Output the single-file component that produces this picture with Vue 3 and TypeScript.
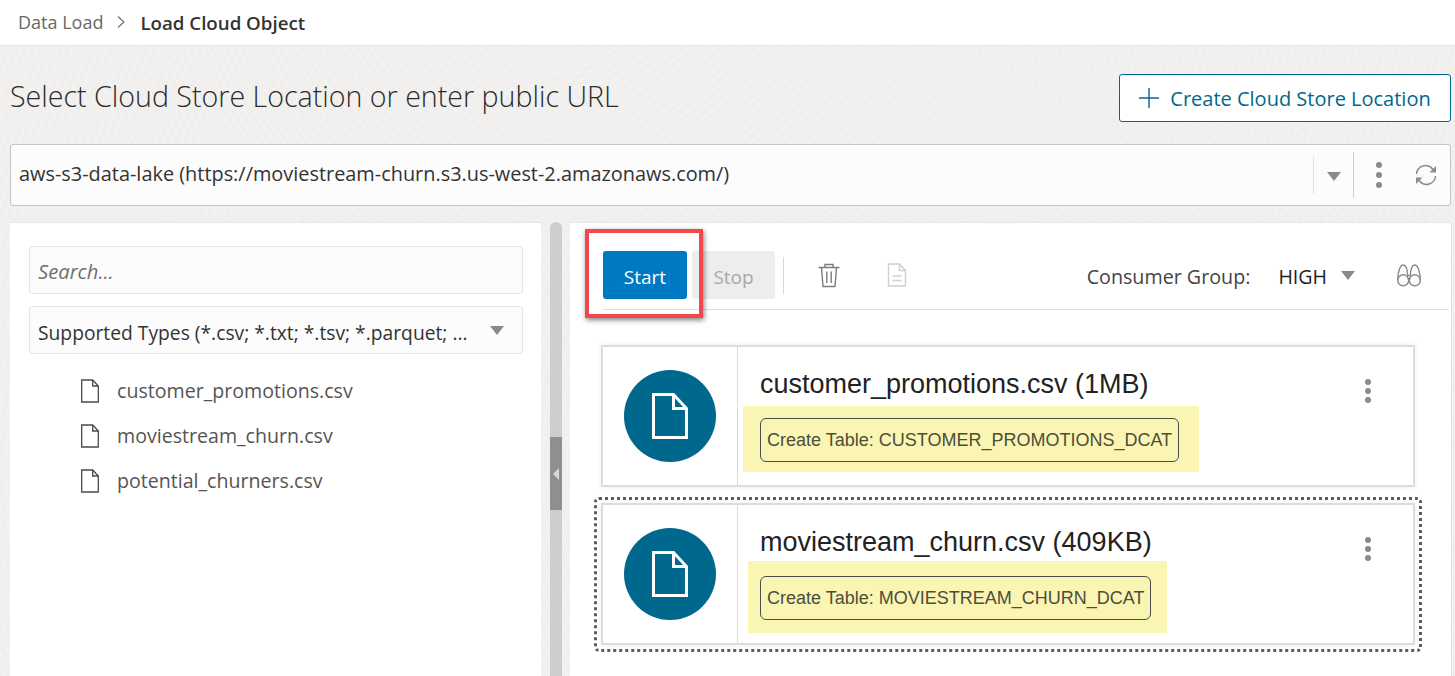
<script setup lang="ts">
interface CloudFile {
  name: string
  size: string
  table: string
  focused: boolean
}

const sourceFiles = ['customer_promotions.csv', 'moviestream_churn.csv', 'potential_churners.csv']

const cards: CloudFile[] = [
  { name: 'customer_promotions.csv', size: '1MB', table: 'CUSTOMER_PROMOTIONS_DCAT', focused: false },
  { name: 'moviestream_churn.csv', size: '409KB', table: 'MOVIESTREAM_CHURN_DCAT', focused: true },
]
</script>

<template>
  <div class="page">
    <header class="crumbs">
      <span class="crumb">Data Load</span>
      <svg class="crumb-sep" width="10" height="14" viewBox="0 0 10 14">
        <path d="M2 1.500 8 7l-6 5.500" fill="none" stroke="#6b6b6b" stroke-width="1.100" />
      </svg>
      <span class="crumb-current">Load Cloud Object</span>
    </header>

    <main class="body">
      <div class="title-row">
        <h1 class="title">Select Cloud Store Location or enter public URL</h1>
        <button class="create-btn">
          <svg width="20" height="20" viewBox="0 0 20 20">
            <path d="M10 0v20M0 10h20" stroke="#00688c" stroke-width="1.400" />
          </svg>
          <span class="create-label">Create Cloud Store Location</span>
        </button>
      </div>

      <div class="location">
        <span class="location-text">aws-s3-data-lake (https://moviestream-churn.s3.us-west-2.amazonaws.com/)</span>
        <div class="location-tools">
          <span class="caret-cell"><i class="caret"></i></span>
          <span class="dots-cell">
            <i class="dot"></i><i class="dot"></i><i class="dot"></i>
          </span>
          <svg class="refresh" width="24" height="24" viewBox="0 0 24 24" fill="none" stroke="#8b8b8b" stroke-width="1.500">
            <path d="M2.500 11a9 9 0 0 1 16-5l2 2.500" />
            <path d="M21.500 13a9 9 0 0 1-16 5l-2-2.500" />
            <path d="M22 3v6.500h-6.500z" fill="#8b8b8b" stroke="none" />
            <path d="M2 21v-6.500h6.500z" fill="#8b8b8b" stroke="none" />
          </svg>
        </div>
      </div>

      <div class="split">
        <aside class="left">
          <div class="search"><span>Search...</span></div>
          <div class="types">
            <span class="types-label">Supported Types (*.csv; *.txt; *.tsv; *.parquet; ...</span>
            <i class="caret"></i>
          </div>
          <ul class="tree">
            <li v-for="f in sourceFiles" :key="f" class="tree-row">
              <svg width="18" height="24" viewBox="0 0 18 24" fill="none" stroke="#4a4a4a" stroke-width="1.300">
                <path d="M.7 1h11l5.600 6v16H.7z" />
                <path d="M11.700 1v6h5.600" />
              </svg>
              <span>{{ f }}</span>
            </li>
          </ul>
        </aside>

        <div class="splitter">
          <div class="splitter-thumb"><i class="splitter-arrow"></i></div>
        </div>

        <section class="right">
          <div class="toolbar">
            <button class="btn-start">Start</button>
            <button class="btn-stop">Stop</button>
            <span class="tool-sep"></span>
            <svg class="trash" width="22" height="25" viewBox="0 0 22 25" fill="none" stroke="#7c7c7c" stroke-width="1.400">
              <path d="M.5 4.500h21M7 4.500V1.500h8v3M3.500 4.500l1.500 19h12l1.500-19" />
              <path d="M8.800 8.500v11.500M13.200 8.500v11.500" />
            </svg>
            <svg class="doc" width="20" height="24" viewBox="0 0 20 24" fill="none" stroke="#cfcfcf" stroke-width="1.400">
              <path d="M1.500 1h11l6 6.500V23h-17z" />
              <path d="M12.500 1v6.500h6M5.500 13h9M5.500 17.500h9" />
            </svg>
            <span class="consumer-label">Consumer Group:</span>
            <span class="consumer-value">HIGH</span>
            <i class="caret"></i>
            <svg class="binoculars" width="24" height="23" viewBox="0 0 24 23" fill="none" stroke="#8b8b8b" stroke-width="1.400">
              <circle cx="6.200" cy="16.300" r="5.500" />
              <circle cx="17.800" cy="16.300" r="5.500" />
              <path d="M.7 16.300C.7 10 2.500 1 6.200 1c3.300 0 4.400 4 4.400 11.500M23.300 16.300C23.300 10 21.500 1 17.800 1c-3.300 0-4.400 4-4.400 11.500M10.600 11.500h2.800M10.600 15h2.800" />
            </svg>
          </div>

          <div class="cards">
            <div v-for="c in cards" :key="c.name" class="card-wrap" :class="{ focused: c.focused }">
              <article class="card">
                <div class="card-icon">
                  <div class="circle">
                    <svg width="36" height="46" viewBox="0 0 36 46" fill="none" stroke="#fff" stroke-width="3">
                      <path d="M1.500 1.500h20l13 14v29h-33z" />
                      <path d="M21.500 1.500v14h13" />
                    </svg>
                  </div>
                </div>
                <div class="card-main">
                  <div class="card-title">{{ c.name }} ({{ c.size }})</div>
                  <div class="highlight">
                    <span class="tag">Create Table: {{ c.table }}</span>
                  </div>
                </div>
                <div class="card-menu">
                  <i class="dot"></i><i class="dot"></i><i class="dot"></i>
                </div>
              </article>
            </div>
          </div>

          <div class="callout"></div>
        </section>
      </div>
    </main>
  </div>
</template>

<style>
html,
body {
  overflow: hidden;
}
</style>

<style scoped>
.page {
  width: 1455px;
  height: 676px;
  overflow: hidden;
  font-family: "Open Sans", "Noto Sans", sans-serif;
  color: #333;
  background: #f0efed;
}

i {
  display: block;
}

/* breadcrumb */
.crumbs {
  height: 46px;
  box-sizing: border-box;
  padding: 0 0 1px 18px;
  display: flex;
  align-items: center;
  background: #fff;
  border-bottom: 1px solid #e6e6e6;
  font-size: 18px;
}

.crumb {
  color: #686868;
}

.crumb-sep {
  margin: 0 14px 0 13px;
}

.crumb-current {
  color: #333;
  font-weight: 600;
  font-size: 18.700px;
}

.body {
  height: 630px;
  padding: 0 4px 0 10px;
  background-image:
    repeating-radial-gradient(circle at 560px -120px, rgba(255, 255, 255, 0.14) 0 2px, transparent 2px 7px),
    repeating-radial-gradient(circle at 1000px 420px, rgba(255, 255, 255, 0.12) 0 2px, transparent 2px 8px);
}

.title-row {
  height: 98px;
  display: flex;
  justify-content: space-between;
  align-items: flex-start;
}

.title {
  margin: 31px 0 0;
  font-size: 28.600px;
  line-height: 38px;
  font-weight: 300;
  color: #2b2b2b;
}

.create-btn {
  margin-top: 28px;
  width: 332px;
  height: 48px;
  display: flex;
  align-items: center;
  justify-content: center;
  gap: 11px;
  background: #fff;
  border: 1px solid #00688c;
  border-radius: 3px;
  color: #00688c;
  font: 400 20px "Open Sans", sans-serif;
}

.create-label {
  padding-top: 1px;
}

/* location select */
.location {
  height: 62px;
  box-sizing: border-box;
  display: flex;
  align-items: center;
  justify-content: space-between;
  padding-left: 8px;
  background: #fcfcfc;
  border: 1px solid #c4c4c4;
  border-radius: 3px;
}

.location-text {
  padding-bottom: 3px;
  font-size: 19.900px;
  color: #333;
}

.location-tools {
  display: flex;
  align-items: center;
  height: 100%;
}

.caret-cell {
  width: 40px;
  height: 38px;
  padding-top: 2px;
  box-sizing: border-box;
  display: flex;
  align-items: center;
  justify-content: center;
  border-left: 1px solid #e2e2e2;
}

.caret {
  width: 0;
  height: 0;
  border-left: 7px solid transparent;
  border-right: 7px solid transparent;
  border-top: 9px solid #8a8a8a;
}

.dots-cell {
  width: 50px;
  height: 46px;
  box-sizing: border-box;
  display: flex;
  flex-direction: column;
  align-items: center;
  justify-content: center;
  gap: 2px;
  border-left: 1px solid #cfcfcf;
}

.dot {
  width: 6px;
  height: 6px;
  margin: 1px 0;
  border-radius: 50%;
  background: #8a8a8a;
}

.refresh {
  margin: 0 12px 0 11px;
}

/* split */
.split {
  margin-top: 16px;
  display: flex;
  height: 460px;
}

.left {
  width: 531px;
  box-sizing: border-box;
  padding: 23px 18px 0 19px;
  background: #fff;
  border-top: 1px solid #e6e6e6;
}

.search,
.types {
  height: 48px;
  box-sizing: border-box;
  display: flex;
  align-items: center;
  padding-left: 8px;
  background: #fcfcfc;
  border: 1px solid #e4e4e4;
  border-radius: 3px;
}

.search {
  padding-top: 2px;
  font-style: italic;
  font-size: 20.200px;
  color: #6f6f6f;
}

.types {
  margin-top: 12px;
  justify-content: space-between;
  padding-right: 18px;
  color: #333;
  white-space: nowrap;
}

.types-label {
  padding-top: 4px;
  font-size: 19.250px;
}

.tree {
  list-style: none;
  margin: 14px 0 0;
  padding: 0 0 0 52px;
}

.tree-row {
  height: 45px;
  display: flex;
  align-items: center;
  gap: 18px;
  font-size: 19.600px;
  color: #555;
}

.splitter {
  width: 12px;
  margin: 0 8px 0 9px;
  position: relative;
  background: #cdcdcd;
  border-radius: 6px 6px 0 0;
}

.splitter-thumb {
  position: absolute;
  left: 0;
  right: 0;
  top: 215px;
  height: 73px;
  display: flex;
  align-items: center;
  justify-content: center;
  background: #8f8f8f;
}

.splitter-arrow {
  width: 0;
  height: 0;
  border-top: 6px solid transparent;
  border-bottom: 6px solid transparent;
  border-right: 6px solid #d8d8d8;
}

/* right panel */
.right {
  position: relative;
  flex: 1;
  margin-right: -1px;
  padding: 0 2px 0 33px;
  background: #fff;
  border-top: 1px solid #e6e6e6;
  border-right: 1px solid #dedede;
}

.toolbar {
  height: 87px;
  box-sizing: border-box;
  padding: 28px 0 10px;
  display: flex;
  align-items: center;
  border-bottom: 1px solid #e0e0e0;
}

.btn-start,
.btn-stop {
  height: 48px;
  width: 84px;
  padding: 3px 0 0;
  border: 0;
  border-radius: 3px;
  font: 400 19px "Open Sans", sans-serif;
}

.btn-start {
  background: #0079c5;
  color: #fff;
}

.btn-stop {
  margin-left: 5px;
  width: 83px;
  background: #ededed;
  color: #a8a8a8;
}

.tool-sep {
  width: 1px;
  height: 37px;
  margin: 0 34px 0 8px;
  background: #d8d8d8;
}

.doc {
  margin-left: 47px;
}

.consumer-label {
  margin-left: auto;
  padding-top: 3px;
  font-size: 19.700px;
  color: #444;
}

.consumer-value {
  margin: 0 14px 0 28px;
  padding-top: 3px;
  font-size: 19.600px;
  color: #222;
}

.binoculars {
  margin: 0 28px 0 42px;
}

.cards {
  margin-top: 35px;
  margin-left: -2px;
  width: 814px;
  display: flex;
  flex-direction: column;
  gap: 16px;
}

.card-wrap {
  position: relative;
}

.card-wrap.focused::after {
  content: "";
  position: absolute;
  inset: -6px -7px -7px;
  border: 3px dotted #5c5c5c;
  border-radius: 5px;
}

.card {
  height: 142px;
  box-sizing: border-box;
  display: flex;
  border: 2px solid #dcdcdc;
  background: #fff;
  box-shadow: 0 0 6px rgba(0, 0, 0, 0.08);
}

.card-icon {
  width: 134px;
  display: flex;
  align-items: center;
  justify-content: center;
  border-right: 1px solid #dcdcdc;
}

.circle {
  width: 92px;
  height: 92px;
  display: flex;
  align-items: center;
  justify-content: center;
  border-radius: 50%;
  background: #00688c;
}

.card-main {
  flex: 1;
  padding: 19px 0 0 5px;
  font-family: "Liberation Sans", Arial, sans-serif;
}

.card-title {
  padding-left: 17px;
  font-size: 27px;
  line-height: 36px;
  color: #222;
}

.highlight {
  display: inline-flex;
  align-items: center;
  margin-top: 4px;
  padding: 12px 20px 10px 17px;
  background: #fbf5b4;
}

.focused .highlight {
  margin: 1px 0 0 5px;
  padding: 15px 16px 13px 12px;
}

.tag {
  height: 44px;
  box-sizing: border-box;
  display: flex;
  align-items: center;
  padding: 0 6px;
  border: 1px solid #4d4d4d;
  border-radius: 6px;
  font-size: 18px;
  color: #4d4d3a;
}

.card-menu {
  width: 90px;
  padding-top: 31px;
  box-sizing: border-box;
  display: flex;
  flex-direction: column;
  align-items: center;
  gap: 1px;
}

/* red annotation round the start button */
.callout {
  position: absolute;
  left: 15px;
  top: 6px;
  width: 118px;
  height: 89px;
  box-sizing: border-box;
  border: 4px solid #f4474a;
  box-shadow: 1px 2px 5px rgba(0, 0, 0, 0.5);
}
</style>
